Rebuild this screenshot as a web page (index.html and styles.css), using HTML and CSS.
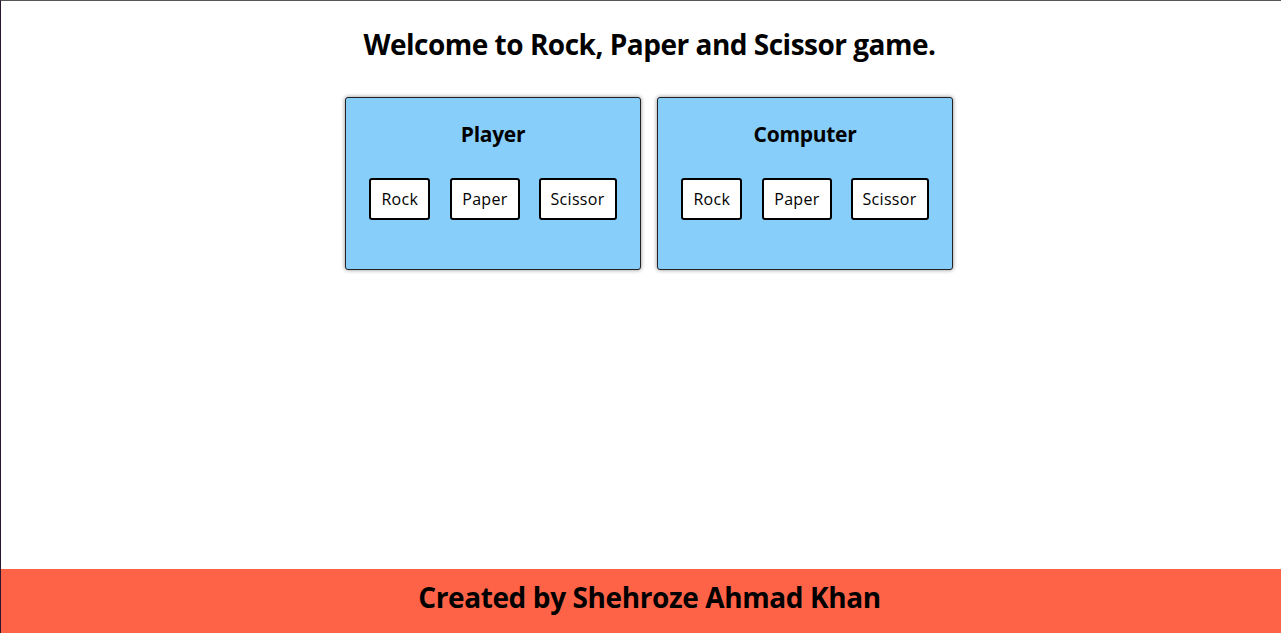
FILE: index.html
```html
<!DOCTYPE html>
<html>
<head>
<meta charset="utf-8">
<link rel="stylesheet" href="styles.css">
</head>
<body>
<div class="page">
  <main class="main">
    <h1 class="title">Welcome to Rock, Paper and Scissor game.</h1>
    <div class="boards">
      <section class="card">
        <h2 class="card-title">Player</h2>
        <div class="choices">
          <button class="choice">Rock</button>
          <button class="choice">Paper</button>
          <button class="choice">Scissor</button>
        </div>
      </section>
      <section class="card">
        <h2 class="card-title">Computer</h2>
        <div class="choices">
          <button class="choice">Rock</button>
          <button class="choice">Paper</button>
          <button class="choice">Scissor</button>
        </div>
      </section>
    </div>
  </main>
  <footer class="footer">Created by Shehroze Ahmad Khan</footer>
</div>
</body>
</html>
```
FILE: styles.css
```css
html, body {
  margin: 0;
  padding: 0;
  height: 100%;
}
body {
  font-family: "Open Sans", "Noto Sans", sans-serif;
  color: #000;
  background: #fff;
}
.page {
  box-sizing: border-box;
  height: 100vh;
  display: flex;
  flex-direction: column;
  border-top: 1px solid #555;
  border-left: 1px solid #2b1630;
}
.main {
  flex: 1;
  padding-left: 16px;
  display: flex;
  flex-direction: column;
  align-items: center;
}
.title {
  margin: 24px 0 0 1px;
  font-size: 28px;
  font-weight: 700;
  line-height: 38px;
  letter-spacing: -0.5px;
}
.boards {
  margin-top: 34px;
  display: flex;
  gap: 16px;
}
.card {
  box-sizing: border-box;
  width: 296px;
  height: 173px;
  background: #87cefa;
  border: 1px solid #222;
  border-radius: 3px;
  box-shadow: 0 0 4px rgba(0,0,0,0.45);
  display: flex;
  flex-direction: column;
  align-items: center;
}
.card-title {
  margin: 21px 0 0;
  font-size: 21px;
  font-weight: 700;
  line-height: 30px;
  letter-spacing: -0.3px;
}
.choices {
  margin-top: 29px;
  display: flex;
  gap: 20px;
}
.choice {
  box-sizing: border-box;
  height: 42px;
  padding: 0 10px;
  background: #fff;
  border: 2px solid #000;
  border-radius: 3px;
  font-family: "Open Sans", "Noto Sans", sans-serif;
  font-size: 16px;
  letter-spacing: 0.3px;
  color: #000;
}
.choice + .choice + .choice {
  margin-left: -1px;
}
.footer {
  box-sizing: border-box;
  height: 64px;
  background: #ff6347;
  padding: 0 0 9px 17px;
  display: flex;
  align-items: center;
  justify-content: center;
  font-size: 28px;
  font-weight: 700;
  letter-spacing: -0.4px;
}
```
